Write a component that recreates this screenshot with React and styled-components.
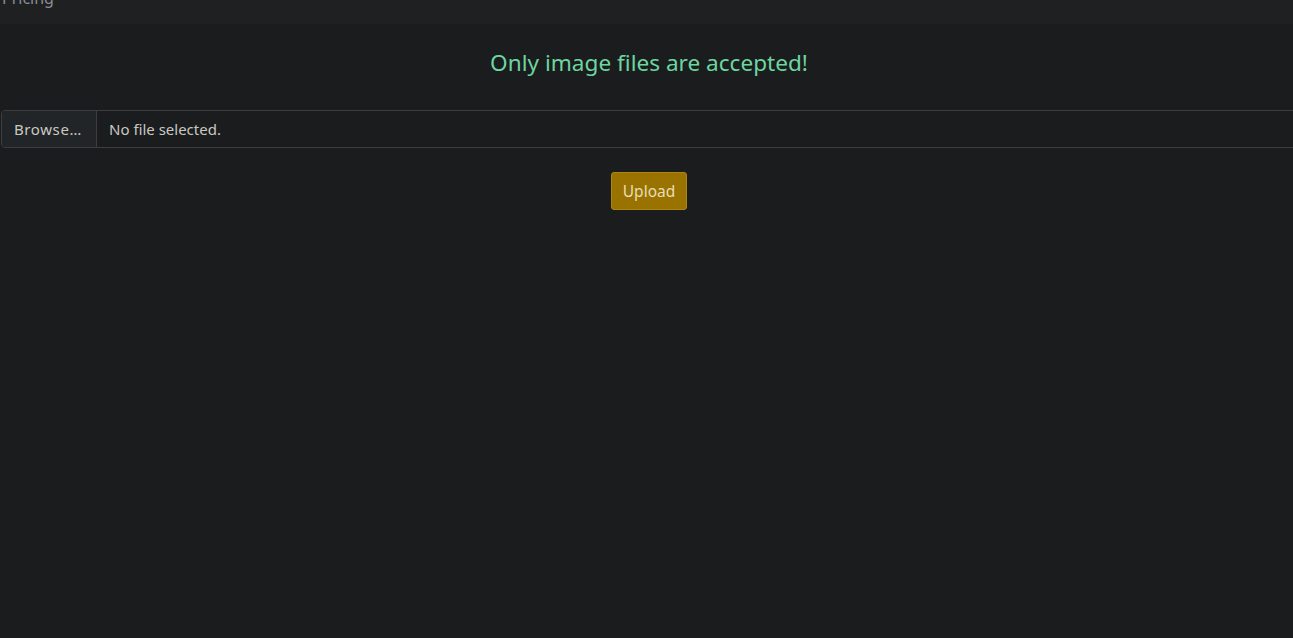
import React from 'react'
import styled, { createGlobalStyle } from 'styled-components'

const Global = createGlobalStyle`
    html, body {
        margin: 0;
        padding: 0;
        background-color: #1b1c1e;
        font-family: "Noto Sans", "Open Sans", sans-serif;
        overflow: hidden;
    }
    * {
        box-sizing: border-box;
    }
`

const Page = styled.div`
    width: 1293px;
    height: 638px;
    background-color: #1b1c1e;
    overflow: hidden;
`

const NavBar = styled.div`
    height: 24px;
    background-color: #1f2022;
    overflow: hidden;
`

const NavLink = styled.span`
    display: block;
    margin-top: -12px;
    padding-left: 2px;
    font-size: 16px;
    line-height: 20px;
    color: #8a8d91;
`

const Main = styled.main`
    width: 1298px;
    display: flex;
    flex-direction: column;
    align-items: center;
`

const Notice = styled.h2`
    margin: 24px 0 0;
    font-size: 22.6px;
    font-weight: 400;
    line-height: 30px;
    color: #6cd6a0;
`

const FileRow = styled.div`
    align-self: stretch;
    display: flex;
    margin: 32px 0 0 1px;
    height: 38px;
    border: 1px solid #3b3d40;
    border-radius: 4px;
    background-color: #1b1c1e;
    overflow: hidden;
`

const BrowseButton = styled.div`
    display: flex;
    align-items: center;
    padding: 0 12px;
    width: 95px;
    background-color: #222527;
    border-right: 1px solid #3b3d40;
    font-size: 15px;
    letter-spacing: 0.6px;
    color: #c9c9c2;
`

const FileName = styled.div`
    display: flex;
    align-items: center;
    padding-left: 12px;
    font-size: 15px;
    color: #c9c9c2;
`

const UploadButton = styled.button`
    margin-top: 24px;
    height: 38px;
    width: 76px;
    padding: 0;
    background-color: #9a7200;
    border: 1px solid #ad8612;
    border-radius: 3px;
    font-family: inherit;
    font-size: 15.5px;
    color: #e8dfb8;
`

const App = () => {
    return (
        <Page>
            <Global />
            <NavBar>
                <NavLink>Pricing</NavLink>
            </NavBar>
            <Main>
                <Notice>Only image files are accepted!</Notice>
                <FileRow>
                    <BrowseButton>Browse…</BrowseButton>
                    <FileName>No file selected.</FileName>
                </FileRow>
                <UploadButton>Upload</UploadButton>
            </Main>
        </Page>
    )
}

export default App
